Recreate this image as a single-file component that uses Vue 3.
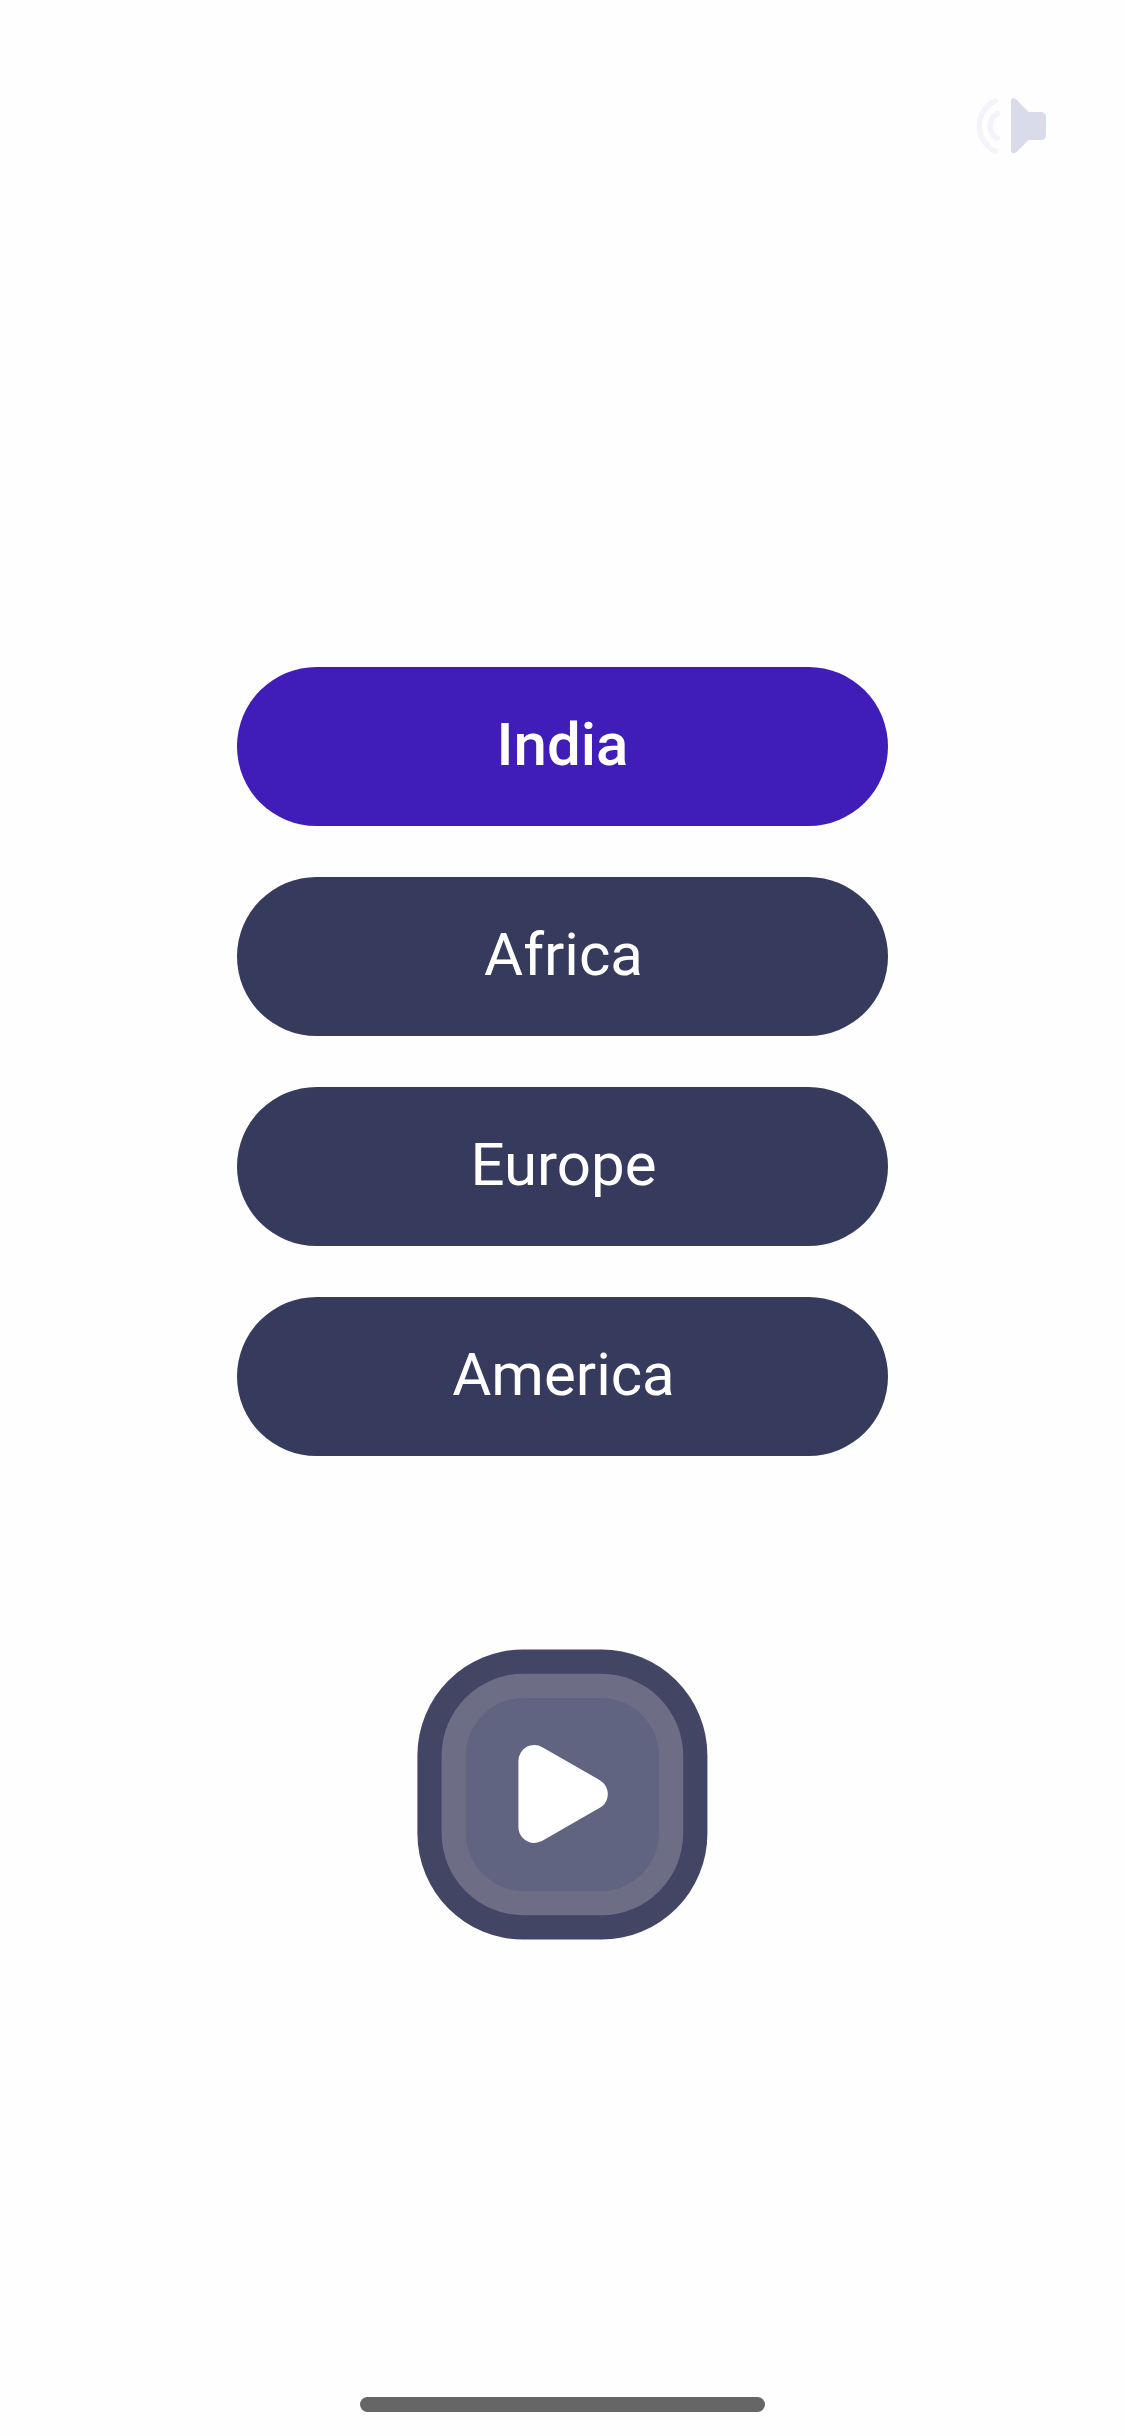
<script setup>
const regions = ['India', 'Africa', 'Europe', 'America']
</script>

<template>
  <main class="screen">
    <header class="top">
      <svg class="sound" width="74" height="60" viewBox="0 0 74 60">
        <g fill="none" stroke="#f4f3fa" stroke-width="5.4" stroke-linecap="round">
          <path d="M20.3 3.9A27.7 27.7 0 0 0 20.3 54.1" />
          <path d="M22.3 16.6A14.2 14.2 0 0 0 22.3 41.4" />
        </g>
        <path d="M36 4.2C36 1.4 39.2 .3 41.2 2.4L53.5 15H65.5Q71 15 71 20.5V37.5Q71 43 65.5 43H53.5L41.2 55.3C39.2 57.3 36 56.2 36 53.4Z" fill="#d9daea" />
      </svg>
    </header>
    <nav class="list">
      <button v-for="(r, i) in regions" :key="r" class="pill" :class="{ active: i === 0 }">{{ r }}</button>
    </nav>
    <button class="play" aria-label="Play">
      <svg width="291" height="291" viewBox="0 0 291 291">
        <rect x=".4" y=".5" width="290" height="290" rx="106" fill="#424564" />
        <rect x="24.6" y="24.7" width="241.6" height="241.6" rx="82" fill="#6d6e86" />
        <rect x="48.8" y="48.9" width="193.2" height="193.2" rx="58" fill="#616480" />
        <path d="M117.4 112V178L174.8 145Z" fill="#fff" stroke="#fff" stroke-width="32" stroke-linejoin="round" />
      </svg>
    </button>
    <div class="home"></div>
  </main>
</template>

<style>
body { margin: 0; background: #fefefe; }
</style>
<style scoped>
.screen { width: 1125px; height: 2436px; display: flex; flex-direction: column; align-items: center; background: #fefefe; overflow: hidden; }
.top { width: 100%; height: 667px; flex: none; display: flex; justify-content: flex-end; box-sizing: border-box; padding: 97px 76px 0 0; }
.list { display: flex; flex-direction: column; gap: 51px; }
.pill { display: block; width: 651px; height: 159px; padding: 0 0 5px 2px; border: 0; border-radius: 80px; background: #363a5d; color: #fff; font: 400 60px Roboto, sans-serif; }
.pill.active { padding-left: 0; background: #401cb9; font-weight: 500; }
.play { margin-top: 193px; border: 0; padding: 0; background: none; display: flex; }
.home { width: 405px; height: 15px; margin-top: 457px; border-radius: 8px; background: #666; }
</style>
